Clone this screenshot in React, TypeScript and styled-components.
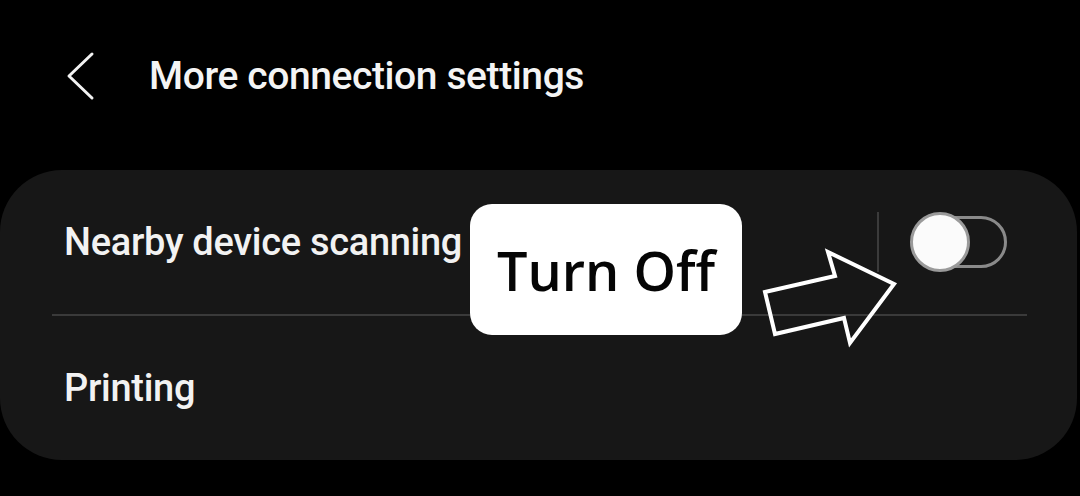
import React from "react";
import styled, { createGlobalStyle } from "styled-components";

const Global = createGlobalStyle`
  html, body { margin: 0; padding: 0; background: #000; }
  body { width: 1080px; height: 496px; overflow: hidden; font-family: Roboto, "Open Sans", sans-serif; }
`;

const Screen = styled.div`
  width: 1080px;
  height: 496px;
  background: #000;
  display: flex;
  flex-direction: column;
  position: relative;
`;

const Header = styled.header`
  height: 170px;
  box-sizing: border-box;
  padding: 0 0 18px 66px;
  display: flex;
  align-items: center;
  gap: 53px;
`;

const BackButton = styled.button`
  width: 30px;
  height: 50px;
  padding: 0;
  border: 0;
  background: none;
  display: flex;
  align-items: center;
  justify-content: center;
`;

const Title = styled.h1`
  margin: 0;
  font-family: Roboto, sans-serif;
  font-weight: 500;
  font-size: 39px;
  letter-spacing: -0.4px;
  color: #f4f4f4;
`;

const Card = styled.section`
  width: 1077px;
  height: 290px;
  background: #171717;
  border-radius: 62px;
  display: flex;
  flex-direction: column;
  position: relative;
`;

const Row = styled.div`
  flex: 1;
  display: flex;
  align-items: center;
  padding: 0 70px 0 64px;
  gap: 32px;
`;

const Label = styled.span`
  flex: 1;
  font-family: Roboto, sans-serif;
  font-weight: 500;
  font-size: 38px;
  letter-spacing: -0.3px;
  color: #f2f2f2;
`;

const Divider = styled.div`
  height: 2px;
  margin: 0 50px 0 52px;
  background: #3a3a3a;
`;

const VSep = styled.div`
  width: 2px;
  height: 60px;
  background: #3b3b3b;
`;

const Switch = styled.div`
  width: 96px;
  height: 52px;
  box-sizing: border-box;
  border: 3px solid #8a8a8a;
  border-radius: 26px;
  position: relative;
`;

const Thumb = styled.div`
  position: absolute;
  left: -4px;
  top: -7px;
  width: 60px;
  height: 60px;
  box-sizing: border-box;
  border-radius: 50%;
  background: #fbfbfb;
  border: 3px solid #9a9a9a;
`;

const Callout = styled.div`
  position: absolute;
  left: 470px;
  top: 204px;
  width: 272px;
  height: 131px;
  background: #fff;
  border-radius: 22px;
  display: flex;
  align-items: center;
  justify-content: center;
  font-family: "Open Sans", sans-serif;
  font-weight: 600;
  font-size: 54px;
  color: #050505;
`;

const ArrowSvg = styled.svg`
  position: absolute;
  left: 0;
  top: 0;
  pointer-events: none;
`;

export default function App() {
  return (
    <>
      <Global />
      <Screen>
        <Header>
          <BackButton aria-label="Back">
            <svg width="30" height="50" viewBox="0 0 30 50">
              <polyline points="26,3 3,25 26,47" fill="none" stroke="#f2f2f2" strokeWidth="3" strokeLinecap="round" strokeLinejoin="round" />
            </svg>
          </BackButton>
          <Title>More connection settings</Title>
        </Header>
        <Card>
          <Row>
            <Label>Nearby device scanning</Label>
            <VSep />
            <Switch>
              <Thumb />
            </Switch>
          </Row>
          <Divider />
          <Row>
            <Label>Printing</Label>
          </Row>
        </Card>
        <Callout>Turn Off</Callout>
        <ArrowSvg width="1080" height="496" viewBox="0 0 1080 496">
          <polygon
            points="765,292 835,276 828,252 894,284 850,343 844,318 775,334"
            fill="none"
            stroke="#fff"
            strokeWidth="4"
            strokeLinejoin="miter"
          />
        </ArrowSvg>
      </Screen>
    </>
  );
}
